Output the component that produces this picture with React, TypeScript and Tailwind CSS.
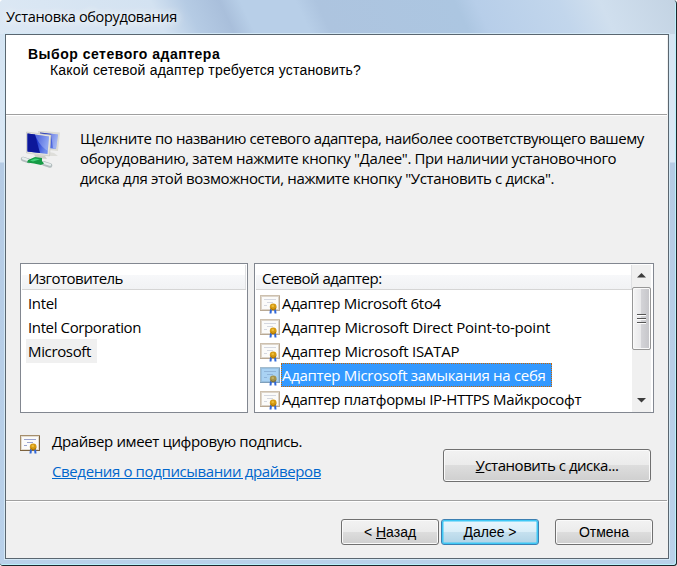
import React from 'react';

const manufacturers = [
  { name: 'Intel', track: 'tracking-[-0.35px]' },
  { name: 'Intel Corporation', track: 'tracking-[-0.38px]' },
  { name: 'Microsoft', track: 'tracking-[-0.35px]' },
];

const adapters = [
  { name: 'Адаптер Microsoft 6to4', track: 'tracking-[-0.32px]' },
  { name: 'Адаптер Microsoft Direct Point-to-point', track: 'tracking-[-0.23px]' },
  { name: 'Адаптер Microsoft ISATAP', track: 'tracking-[-0.24px]' },
  { name: 'Адаптер Microsoft замыкания на себя', track: 'tracking-[-0.31px]' },
  { name: 'Адаптер платформы IP-HTTPS Майкрософт', track: 'tracking-[-0.32px]' },
];

const CertificateIcon = ({ selected = false, strong = false }: { selected?: boolean; strong?: boolean }) => (
  <svg width="20" height="19" viewBox="0 0 20 19" className="shrink-0">
    <rect x="0.5" y="0.5" width="19" height="15" fill={selected ? '#a9d2f3' : '#fbfbfa'} stroke={selected ? '#a3bccd' : strong ? '#a58e6c' : '#cdc0ae'} />
    <path d="M0 15.5H20M19.5 1V15" stroke={selected ? '#7fa0bb' : strong ? '#7c613d' : '#b9a994'} />
    <rect x="1.5" y="1.5" width="17" height="13" fill="none" stroke={selected ? '#97bfe0' : strong ? '#e3dccf' : '#ddd5ca'} />
    <path d="M4 4.5H16M7 7.5H13M4 10.5H7" stroke={selected ? '#8fb4da' : strong ? '#9aa3cd' : '#d5d8e0'} />
    <path d="M11 14L10.500 18.500M15 14L15.500 18.500" stroke="#2f66d8" strokeWidth="2" />
    <circle cx="13.2" cy="11.8" r="3.4" fill={selected ? '#a2924c' : '#d59a13'} />
    <path d="M10.700 12.800a2.600 2.600 0 0 0 5 0" fill="none" stroke={selected ? '#746d40' : '#a87307'} />
    <circle cx="12.8" cy="11" r="1.3" fill={selected ? '#c1b066' : '#edbd38'} />
  </svg>
);

const NetworkIcon = () => (
  <svg width="40" height="37" viewBox="0 0 40 37" className="shrink-0">
    <defs>
      <linearGradient id="screen" x1="0" y1="0" x2="1" y2="0.3">
        <stop offset="0" stopColor="#1023a8" />
        <stop offset="0.5" stopColor="#1d37cf" />
        <stop offset="1" stopColor="#6f8cec" />
      </linearGradient>
    </defs>
    <path d="M18 -0.500L40 1.500L38 20L19 18Z" fill="#dcdcd6" />
    <path d="M20 1.500L38 3.500L36 18L21 16Z" fill="url(#screen)" />
    <path d="M31 2.800L38 3.500L36 18L33 17Z" fill="#e5ecff" opacity="0.4" />
    <path d="M24 20L34 22L38 25L27 25Z" fill="#dededa" />
    <path d="M6.500 1L31 4L29.500 25L6.500 22Z" fill="#e5e4de" stroke="#c4c4bc" strokeWidth="0.6" />
    <path d="M7.500 2.500L29 5.500L27.500 23L7.500 20.500Z" fill="url(#screen)" />
    <path d="M7.500 2.500L15 3.500L20 22L7.500 20.500Z" fill="#0d179a" />
    <path d="M15 3.500L29 5.500L27.700 20C23 17 18 12 15 3.500Z" fill="#c9d6ff" opacity="0.35" />
    <path d="M14 23.500L25 24.700L27 28L16 27Z" fill="#cfcfc9" />
    <path d="M3 28L9 30" stroke="#b3bdbe" strokeWidth="4.500" strokeLinecap="round" />
    <path d="M3 27.400L9 29.400" stroke="#e7eeee" strokeWidth="2.200" strokeLinecap="round" />
    <path d="M24 32.500L30 34.500" stroke="#b3bdbe" strokeWidth="4.500" strokeLinecap="round" />
    <path d="M24 32L30 33.800" stroke="#e7eeee" strokeWidth="2.200" strokeLinecap="round" />
    <path d="M8 29L15 26L22 27L22 30L24 32.500L21 34L14 32.500L7 31.500Z" fill="#169b45" />
    <path d="M10 29.500L15 27.400L20 28.300L13 30.500Z" fill="#43d27a" />
  </svg>
);

const HeaderCell = ({ children }: { children: React.ReactNode }) => (
  <div className="h-[25px] border-b border-[#d5d5d5] bg-[linear-gradient(#fff_40%,#f7f8fa_40%,#f1f2f4)]">
    <div className="h-full border-r border-[#dfe0e2] leading-[26px]">{children}</div>
  </div>
);

const Button = ({ className, children }: { className: string; children: React.ReactNode }) => (
  <button className={`rounded-[3px] border text-black ${className}`}>{children}</button>
);

const grayButton =
  'border-[#707070] bg-[linear-gradient(#f2f2f2,#ebebeb_50%,#dddddd_50%,#cfcfcf)] shadow-[inset_0_0_0_1px_#fafafa]';
const blueButton =
  'border-[#3c7fb1] bg-[linear-gradient(#eaf6fd,#d9eef8_50%,#c6e1ef_50%,#b0d3e6)] shadow-[inset_0_0_0_1.5px_#3fc8f5]';

const Scrollbar = () => (
  <div className="mr-[2px] flex w-[19px] shrink-0 flex-col items-center bg-[#f0f0f0] pb-px">
    <svg width="17" height="22" viewBox="0 0 17 22">
      <path d="M4 12.500L8.500 8L13 12.500Z" fill="#3c3c3c" />
    </svg>
    <div className="flex h-[63px] w-[19px] flex-col items-center justify-center gap-[2px] rounded-[2px] border border-[#979797] bg-[linear-gradient(90deg,#f5f5f5,#e9e9eb_45%,#d3d3d7_50%,#c5c5c9)] shadow-[inset_0_0_0_1px_#fafafa]">
      {[0, 1, 2].map((i) => (
        <div key={i} className="h-[2px] w-[9px] border-b border-white bg-[#555]" />
      ))}
    </div>
    <svg width="17" height="22" viewBox="0 0 17 22" className="mt-auto">
      <path d="M4 9L8.500 13.500L13 9Z" fill="#3c3c3c" />
    </svg>
  </div>
);

export default function App() {
  return (
    <div className="flex h-[566px] w-[677px] flex-col overflow-hidden rounded-t-[4px] rounded-b-[3px] border-r border-b border-[#1d262c] bg-[linear-gradient(#d3e3f2,#dbe8f5_162px,#b5cbe4_163px,#b9d1ea)] pr-[7px] pb-[6px] pl-[5px] font-['Open_Sans','Noto_Sans',sans-serif] text-[15px] text-black shadow-[inset_-1px_-1px_0_#b9f0fa]">
      <div className="-mr-[6px] -ml-[5px] h-[34px] shrink-0 bg-[linear-gradient(65deg,#dce8f4,#d3e2f1_24%,#b5cbe4_29%,#a9bfdb_34%,#b8cfe8_37%,#b8cfe8_45%,#adc4df_48%,#acc6e1_68%,#b7cee9_71%,#c2d6ec_83%,#d0dfee_89%,#c3d3e3)] pl-[6px]">
        <span className="block text-[14.5px] leading-[33px] tracking-[-0.34px] [text-shadow:0_0_8px_#fff,0_0_12px_#fff]">Установка оборудования</span>
      </div>

      <div className="flex min-h-0 flex-1 flex-col border border-[#5a6670] bg-[#f0f0f0] outline outline-[#d3e8f6]">
        <div className="mr-px h-[80px] shrink-0 border-b border-[#a0a0a0] bg-white pt-[11px] pl-[22px] font-['Liberation_Sans',sans-serif]">
          <div className="text-[14px] leading-4 font-bold tracking-[0.5px]">Выбор сетевого адаптера</div>
          <div className="pl-[22px] text-[14px] leading-4 tracking-[0.2px]">Какой сетевой адаптер требуется установить?</div>
        </div>

        <div className="mr-px flex h-[386px] shrink-0 flex-col border-t border-b border-t-white border-b-[#a0a0a0] pl-[14px]">
          <div className="flex gap-5 pt-[15px]">
            <NetworkIcon />
            <div className="-mt-[3px] leading-5 whitespace-nowrap">
              <div className="tracking-[-0.42px]">Щелкните по названию сетевого адаптера, наиболее соответствующего вашему</div>
              <div className="tracking-[-0.37px]">оборудованию, затем нажмите кнопку "Далее". При наличии установочного</div>
              <div className="tracking-[-0.37px]">диска для этой возможности, нажмите кнопку "Установить с диска".</div>
            </div>
          </div>

          <div className="mt-[75px] flex gap-[6px]">
            <div className="h-[150px] w-[228px] border border-[#828790] bg-white px-px pt-px">
              <HeaderCell>
                <span className="pl-[6px] tracking-[-0.53px]">Изготовитель</span>
              </HeaderCell>
              <div className="flex flex-col items-start pt-px pl-[4px]">
                {manufacturers.map((m) => (
                  <div key={m.name} className={`h-6 px-[2px] leading-6 ${m.track} ${m.name === 'Microsoft' ? 'w-[71px] bg-[#f0f0f0]' : ''}`}>
                    {m.name}
                  </div>
                ))}
              </div>
            </div>

            <div className="flex h-[150px] w-[400px] border border-[#828790] bg-white pt-px pl-px">
              <div className="flex-1">
                <HeaderCell>
                  <span className="pl-[6px] tracking-[-0.5px]">Сетевой адаптер:</span>
                </HeaderCell>
                <div className="flex flex-col items-start pt-px pl-[4px]">
                  {adapters.map((a, i) => (
                    <div key={a.name} className="flex h-6 gap-px">
                      <div className="pt-1">
                        <CertificateIcon selected={i === 3} />
                      </div>
                      <div className={`h-6 border border-dotted pr-px leading-[22px] whitespace-nowrap ${a.track} ${i === 3 ? 'w-[271px] border-[#cc6600] bg-[#3399ff] text-white' : 'border-transparent'}`}>
                        {a.name}
                      </div>
                    </div>
                  ))}
                </div>
              </div>
              <Scrollbar />
            </div>
          </div>

          <div className="flex justify-between pr-[16px]">
            <div>
              <div className="flex items-start gap-3 pt-[18px] leading-5">
                <div className="pt-[4px]">
                  <CertificateIcon strong />
                </div>
                <span className="tracking-[-0.38px]">Драйвер имеет цифровую подпись.</span>
              </div>
              <a className="mt-[7px] ml-8 block leading-5 tracking-[-0.37px] text-[#0066cc] underline">Сведения о подписывании драйверов</a>
            </div>
            <Button className={`mt-[36px] h-[33px] w-[208px] tracking-[-0.47px] ${grayButton}`}>
              <u>У</u>становить с диска...
            </Button>
          </div>
        </div>

        <div className="flex flex-1 border-t border-white pt-[17px] pl-[335px] font-['Liberation_Sans',sans-serif] text-[14px]">
          <Button className={`h-[26px] w-[98px] ${grayButton}`}>
            &lt; <u>Н</u>азад
          </Button>
          <Button className={`ml-[2px] h-[26px] w-[98px] ${blueButton}`}>
            <u>Д</u>алее &gt;
          </Button>
          <Button className={`ml-[16px] h-[26px] w-[98px] ${grayButton}`}>Отмена</Button>
        </div>
      </div>
    </div>
  );
}
